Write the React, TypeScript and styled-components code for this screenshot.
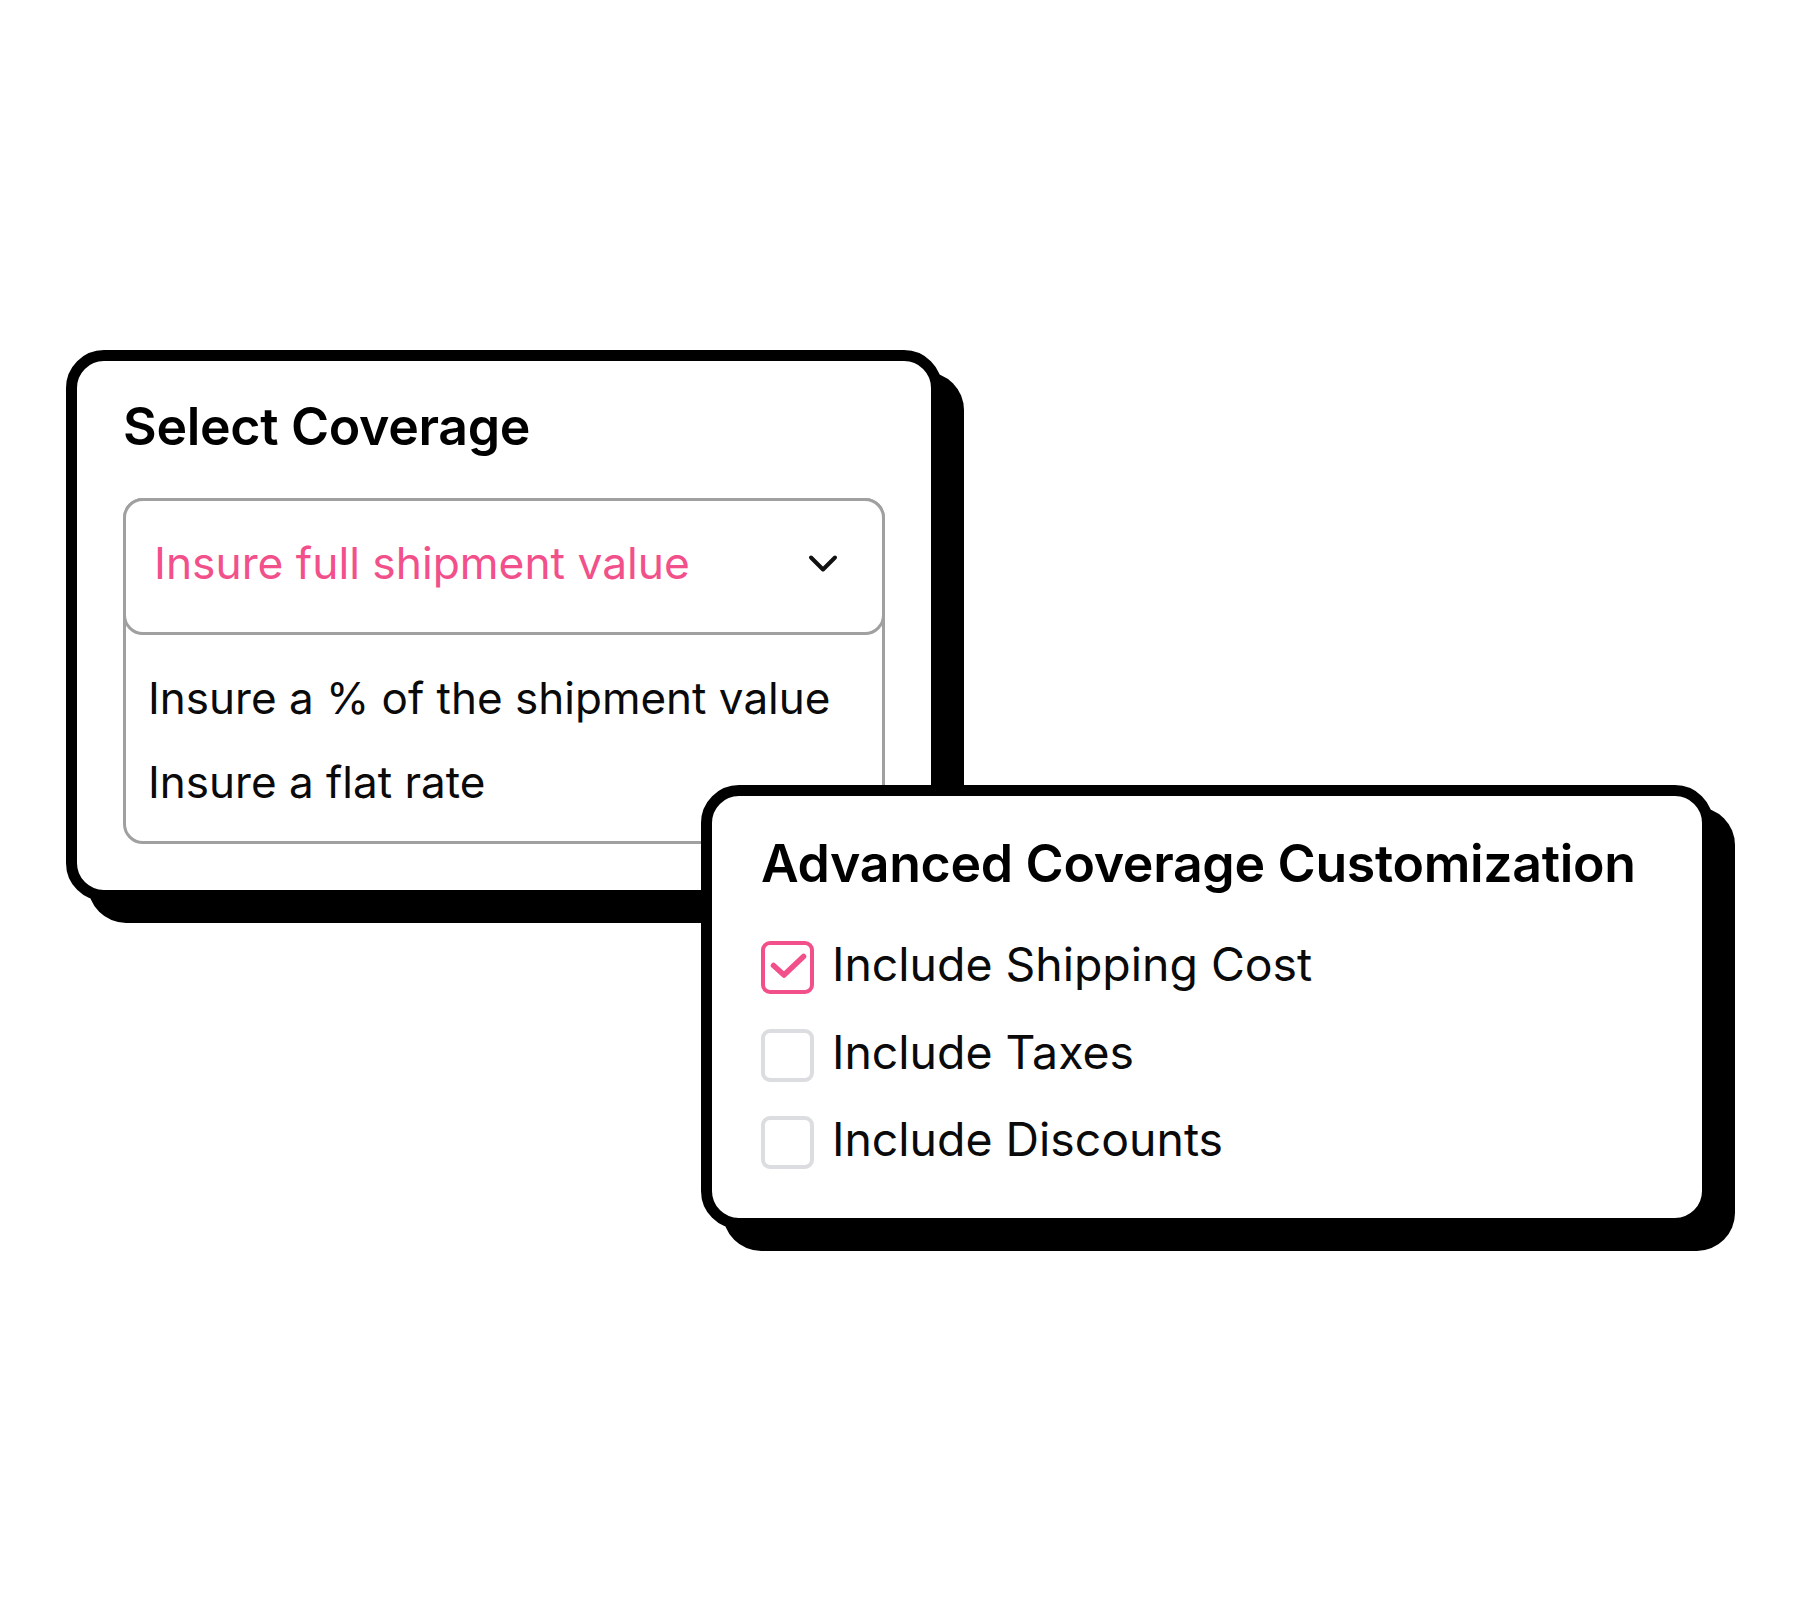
import React from "react";
import styled, { createGlobalStyle } from "styled-components";

const GlobalStyle = createGlobalStyle`
  html, body {
    margin: 0;
    padding: 0;
    background: #ffffff;
  }
  body {
    font-family: Inter, "Noto Sans", "Liberation Sans", sans-serif;
    color: #000000;
  }
`;

const PINK = "#f2508b";
const FIELD_BORDER = "#a0a0a0";

/* Two overlapping cards laid on a shared grid: the first spans the left
   columns, the second starts inside its lower-right corner. */
const Stage = styled.main`
  box-sizing: border-box;
  width: 1800px;
  height: 1600px;
  padding: 350px 0 0 66px;
  display: grid;
  grid-template-columns: 635px 241px 771px;
  grid-template-rows: 435px 114px 331px;
`;

const Card = styled.section<{ $area: string; $pad: string }>`
  grid-area: ${(p) => p.$area};
  align-self: start;
  box-sizing: border-box;
  display: flex;
  flex-direction: column;
  padding: ${(p) => p.$pad};
  background: #ffffff;
  border: 11px solid #000000;
  border-radius: 38px;
  box-shadow: 22px 22px 0 0 #000000;
`;

const Title = styled.h2<{ $gap: number }>`
  margin: 0 0 ${(p) => p.$gap}px;
  font-size: 51.8px;
  font-weight: 600;
  line-height: 63px;
  letter-spacing: -0.3px;
  color: #000000;
`;

const Dropdown = styled.div`
  display: flex;
  flex-direction: column;
  border: 3px solid ${FIELD_BORDER};
  border-radius: 20px;
`;

const Trigger = styled.div`
  box-sizing: border-box;
  height: 137px;
  margin: -3px -3px 0;
  padding: 0 44px 6px 28px;
  display: flex;
  align-items: center;
  justify-content: space-between;
  border: 3px solid ${FIELD_BORDER};
  border-radius: 20px;
  background: #ffffff;
`;

const SelectedValue = styled.span`
  font-size: 44.3px;
  line-height: 53px;
  color: ${PINK};
`;

const OptionList = styled.ul`
  list-style: none;
  margin: 0;
  padding: 37px 0 32px 22px;
  display: flex;
  flex-direction: column;
  gap: 31px;
`;

const Option = styled.li`
  font-size: 44px;
  line-height: 53px;
  color: #0a0a0a;
`;

const CheckList = styled.div`
  display: flex;
  flex-direction: column;
  gap: 34.5px;
`;

const CheckRow = styled.label`
  display: flex;
  align-items: center;
  gap: 18px;
  height: 53px;
`;

const Box = styled.span<{ $checked: boolean }>`
  box-sizing: border-box;
  flex: none;
  width: 53px;
  height: 53px;
  display: flex;
  align-items: center;
  justify-content: center;
  border: 4px solid ${(p) => (p.$checked ? PINK : "#dcdde0")};
  border-radius: 9px;
  background: #ffffff;
`;

const CheckLabel = styled.span`
  font-size: 46.4px;
  line-height: 47px;
  padding-bottom: 6px;
  color: #0a0a0a;
`;

const Chevron = () => (
  <svg width="30" height="20" viewBox="0 0 30 20" fill="none">
    <path
      d="M3 3.5 L15 15.5 L27 3.5"
      stroke="#111111"
      strokeWidth="4"
      strokeLinecap="round"
      strokeLinejoin="round"
    />
  </svg>
);

const Tick = () => (
  <svg width="45" height="45" viewBox="0 0 45 45" fill="none">
    <path
      d="M8.5 20.5 L19 30 L38.5 11.5"
      stroke={PINK}
      strokeWidth="5.5"
      strokeLinecap="round"
      strokeLinejoin="round"
    />
  </svg>
);

const Checkbox = ({ checked, label }: { checked: boolean; label: string }) => (
  <CheckRow>
    <Box $checked={checked}>{checked && <Tick />}</Box>
    <CheckLabel>{label}</CheckLabel>
  </CheckRow>
);

export default function App() {
  return (
    <>
      <GlobalStyle />
      <Stage>
        <Card $area="1 / 1 / 3 / 3" $pad="34px 46px 46px 46px">
          <Title $gap={40}>Select Coverage</Title>
          <Dropdown>
            <Trigger>
              <SelectedValue>Insure full shipment value</SelectedValue>
              <Chevron />
            </Trigger>
            <OptionList>
              <Option>Insure a % of the shipment value</Option>
              <Option>Insure a flat rate</Option>
            </OptionList>
          </Dropdown>
        </Card>

        <Card $area="2 / 2 / 4 / 4" $pad="36px 48px 49px 49px">
          <Title $gap={46}>Advanced Coverage Customization</Title>
          <CheckList>
            <Checkbox checked label="Include Shipping Cost" />
            <Checkbox checked={false} label="Include Taxes" />
            <Checkbox checked={false} label="Include Discounts" />
          </CheckList>
        </Card>
      </Stage>
    </>
  );
}
